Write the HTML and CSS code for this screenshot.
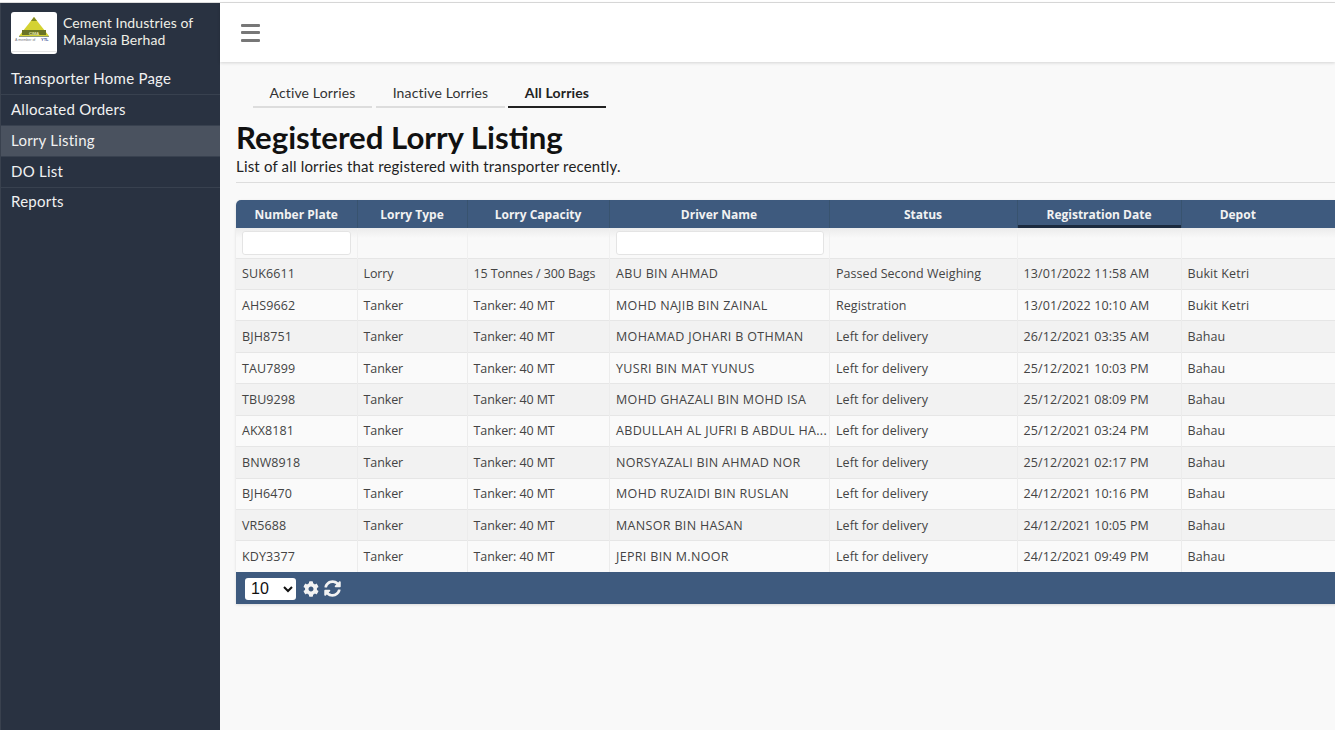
FILE: index.html
```html
<!DOCTYPE html>
<html lang="en">
<head>
<meta charset="utf-8">
<title>Registered Lorry Listing</title>
<link rel="stylesheet" href="styles.css">
</head>
<body>
<div class="app">
  <aside class="sidebar">
    <div class="brand">
      <div class="logo">
        <svg viewBox="0 0 46 42" width="46" height="42">
          <polygon points="23,5 38,24 8,24" fill="#d4d232"/>
          <polygon points="23,5 26,9 20,9" fill="#7f8622"/>
          <rect x="11" y="18" width="24" height="5" fill="#6a7424"/>
          <rect x="8" y="24" width="30" height="1" fill="#8d9a7a"/>
          <text x="23" y="22.6" class="logo-mark" text-anchor="middle">CIMA</text>
          <text x="4" y="29" class="logo-small">A member of</text>
          <text x="30" y="29" class="logo-ytl">YTL</text>
          <rect x="0" y="39" width="46" height="1" fill="#e6e6e6"/>
        </svg>
      </div>
      <div class="brand-name">Cement Industries of Malaysia Berhad</div>
    </div>
    <nav class="nav">
      <a class="nav-item">Transporter Home Page</a>
      <a class="nav-item">Allocated Orders</a>
      <a class="nav-item active">Lorry Listing</a>
      <a class="nav-item">DO List</a>
      <a class="nav-item">Reports</a>
    </nav>
  </aside>
  <div class="main">
    <header class="topbar">
      <div class="burger"><span></span><span></span><span></span></div>
    </header>
    <div class="content">
      <div class="tabs">
        <a class="tab tab-a">Active Lorries</a>
        <a class="tab tab-b">Inactive Lorries</a>
        <a class="tab tab-c current">All Lorries</a>
      </div>
      <h1 class="title">Registered Lorry Listing</h1>
      <p class="subtitle">List of all lorries that registered with transporter recently.</p>
      <hr class="rule">
      <div class="grid">
        <table class="table">
          <colgroup>
            <col class="c1"><col class="c2"><col class="c3"><col class="c4"><col class="c5"><col class="c6"><col class="c7"><col class="c8">
          </colgroup>
          <thead>
            <tr class="head">
              <th>Number Plate</th><th>Lorry Type</th><th>Lorry Capacity</th><th>Driver Name</th><th>Status</th><th class="sorted">Registration Date</th><th>Depot</th><th></th>
            </tr>
            <tr class="filter">
              <td><input class="filter-input" type="text"></td><td></td><td></td><td><input class="filter-input" type="text"></td><td></td><td></td><td></td><td></td>
            </tr>
          </thead>
          <tbody>
            <tr><td>SUK6611</td><td>Lorry</td><td>15 Tonnes / 300 Bags</td><td>ABU BIN AHMAD</td><td>Passed Second Weighing</td><td>13/01/2022 11:58 AM</td><td>Bukit Ketri</td><td></td></tr>
            <tr><td>AHS9662</td><td>Tanker</td><td>Tanker: 40 MT</td><td>MOHD NAJIB BIN ZAINAL</td><td>Registration</td><td>13/01/2022 10:10 AM</td><td>Bukit Ketri</td><td></td></tr>
            <tr><td>BJH8751</td><td>Tanker</td><td>Tanker: 40 MT</td><td>MOHAMAD JOHARI B OTHMAN</td><td>Left for delivery</td><td>26/12/2021 03:35 AM</td><td>Bahau</td><td></td></tr>
            <tr><td>TAU7899</td><td>Tanker</td><td>Tanker: 40 MT</td><td>YUSRI BIN MAT YUNUS</td><td>Left for delivery</td><td>25/12/2021 10:03 PM</td><td>Bahau</td><td></td></tr>
            <tr><td>TBU9298</td><td>Tanker</td><td>Tanker: 40 MT</td><td>MOHD GHAZALI BIN MOHD ISA</td><td>Left for delivery</td><td>25/12/2021 08:09 PM</td><td>Bahau</td><td></td></tr>
            <tr><td>AKX8181</td><td>Tanker</td><td>Tanker: 40 MT</td><td>ABDULLAH AL JUFRI B ABDUL HA...</td><td>Left for delivery</td><td>25/12/2021 03:24 PM</td><td>Bahau</td><td></td></tr>
            <tr><td>BNW8918</td><td>Tanker</td><td>Tanker: 40 MT</td><td>NORSYAZALI BIN AHMAD NOR</td><td>Left for delivery</td><td>25/12/2021 02:17 PM</td><td>Bahau</td><td></td></tr>
            <tr><td>BJH6470</td><td>Tanker</td><td>Tanker: 40 MT</td><td>MOHD RUZAIDI BIN RUSLAN</td><td>Left for delivery</td><td>24/12/2021 10:16 PM</td><td>Bahau</td><td></td></tr>
            <tr><td>VR5688</td><td>Tanker</td><td>Tanker: 40 MT</td><td>MANSOR BIN HASAN</td><td>Left for delivery</td><td>24/12/2021 10:05 PM</td><td>Bahau</td><td></td></tr>
            <tr><td>KDY3377</td><td>Tanker</td><td>Tanker: 40 MT</td><td>JEPRI BIN M.NOOR</td><td>Left for delivery</td><td>24/12/2021 09:49 PM</td><td>Bahau</td><td></td></tr>
          </tbody>
        </table>
        <div class="pager">
          <select class="page-size"><option>10</option></select>
          <svg class="pager-icon" viewBox="0 0 512 512" width="16" height="16"><path fill="#f2f2f2" d="M487.4 315.7l-42.6-24.6c4.3-23.2 4.3-47 0-70.2l42.6-24.6c4.9-2.8 7.1-8.6 5.5-14-11.1-35.6-30-67.8-54.7-94.6-3.8-4.1-10-5.1-14.8-2.3L380.8 110c-17.9-15.4-38.5-27.3-60.8-35.1V25.8c0-5.6-3.9-10.5-9.4-11.7-36.7-8.2-74.3-7.8-109.2 0-5.5 1.2-9.4 6.1-9.4 11.7V75c-22.2 7.9-42.8 19.8-60.8 35.1L88.7 85.5c-4.9-2.8-11-1.9-14.8 2.3-24.7 26.7-43.6 58.9-54.7 94.6-1.7 5.4.6 11.2 5.5 14L67.3 221c-4.3 23.2-4.3 47 0 70.2l-42.6 24.6c-4.9 2.8-7.1 8.6-5.5 14 11.1 35.6 30 67.8 54.7 94.6 3.8 4.1 10 5.1 14.8 2.3l42.6-24.6c17.9 15.4 38.5 27.3 60.8 35.1v49.2c0 5.6 3.9 10.5 9.4 11.7 36.7 8.2 74.3 7.8 109.2 0 5.5-1.2 9.4-6.1 9.4-11.7v-49.2c22.2-7.9 42.8-19.8 60.8-35.1l42.6 24.6c4.9 2.8 11 1.9 14.8-2.3 24.7-26.7 43.6-58.9 54.7-94.6 1.5-5.5-.7-11.3-5.6-14.1zM256 336c-44.1 0-80-35.9-80-80s35.9-80 80-80 80 35.9 80 80-35.9 80-80 80z"/></svg>
          <svg class="pager-icon" viewBox="0 0 512 512" width="17" height="17"><path fill="#f2f2f2" d="M370.7 133.3C339.5 104 298.9 88 255.8 88c-77.5.1-144.3 53.2-162.8 126.9-1.3 5.4-6.1 9.2-11.7 9.2H24.1c-7.5 0-13.2-6.8-11.8-14.2C33.9 94.9 134.8 8 256 8c66.4 0 126.8 26.1 171.3 68.7L463 41c15.1-15.1 41-4.4 41 17v134c0 13.3-10.7 24-24 24H346c-21.4 0-32.1-25.9-17-41l41.7-41.7zM32 296h134c21.4 0 32.1 25.9 17 41l-41.7 41.7c31.2 29.3 71.8 45.3 114.9 45.3 77.4-.1 144.3-53.1 162.8-126.8 1.3-5.4 6.1-9.2 11.7-9.2h57.3c7.5 0 13.2 6.8 11.8 14.2C478.1 417.1 377.2 504 256 504c-66.4 0-126.8-26.1-171.3-68.7L49 471c-15.1 15.1-41 4.4-41-17V320c0-13.3 10.7-24 24-24z"/></svg>
        </div>
      </div>
    </div>
  </div>
</div>
</body>
</html>
```

FILE: styles.css
```css
* { box-sizing: border-box; }
html, body { margin: 0; height: 100%; overflow: hidden; }
body { font-family: "Lato", sans-serif; background: #fff; }
.app { display: flex; height: 730px; padding-top: 3px; position: relative; }
.app::before { content: ""; position: absolute; left: 0; right: 0; top: 2px; height: 1px; background: #dcdcdc; }
.sidebar { width: 220px; flex: none; background: #293241; color: #f1f1f1; border-left: 1px solid #39414e; }
.brand { display: flex; align-items: flex-start; gap: 6px; padding: 9px 0 0 10px; height: 61px; }
.logo { width: 46px; height: 42px; background: #fff; border-radius: 3px; flex: none; overflow: hidden; }
.logo svg { display: block; }
.logo-mark { font-family: "Liberation Sans", sans-serif; font-size: 4px; font-weight: 700; fill: #e8e8b0; }
.logo-small { font-family: "Liberation Sans", sans-serif; font-size: 3.6px; fill: #6f7680; }
.logo-ytl { font-family: "Liberation Sans", sans-serif; font-size: 4px; font-weight: 700; fill: #3c5a9a; }
.brand-name { font-size: 14px; letter-spacing: .1px; line-height: 17px; width: 150px; margin-top: 2px; color: #efefe6; }
.nav { display: flex; flex-direction: column; }
.nav-item { height: 31px; font-size: 15px; letter-spacing: .24px; line-height: 28px; padding-left: 10px; border-bottom: 1px solid #38414f; color: #f1f1f1; }
.nav-item:last-child { border-bottom: 0; line-height: 26px; }
.nav-item.active { background: #4a525f; }
.main { flex: 1; min-width: 0; background: #f9f9f9; display: flex; flex-direction: column; }
.topbar { height: 59px; flex: none; background: #fff; box-shadow: 0 1px 3px rgba(0,0,0,.15); display: flex; align-items: center; padding-left: 21px; position: relative; }
.burger { width: 19px; display: flex; flex-direction: column; gap: 4.5px; }
.burger span { height: 3px; background: #777; border-radius: 1px; }
.content { flex: 1; padding: 19px 0 0 16px; overflow: hidden; }
.tabs { display: flex; padding-left: 17px; height: 27px; }
.tab { font-size: 14px; letter-spacing: .15px; line-height: 23px; height: 27px; text-align: center; color: #333; border-bottom: 2px solid #ddd; }
.tab-a { width: 119px; margin-right: 4px; }
.tab-b { width: 129px; margin-right: 3px; }
.tab-c { width: 98px; font-weight: 700; color: #222; border-bottom-color: #222; }
.title { margin: 13px 0 0; font-size: 31.2px; line-height: 33px; font-weight: 700; color: #111; }
.subtitle { margin: 3px 0 0; font-size: 15px; letter-spacing: .18px; line-height: 18px; color: #222; }
.rule { margin: 7px 0 0; border: 0; height: 1px; background: #ddd; }
.grid { margin-top: 17px; width: 1110px; border-radius: 5px 0 0 0; overflow: hidden; box-shadow: 0 1px 3px rgba(0,0,0,.12); }
.table { width: 1110px; table-layout: fixed; border-collapse: collapse; font-family: "Open Sans", sans-serif; font-size: 12.5px; letter-spacing: .1px; color: #444; }
.c1 { width: 121px; } .c2 { width: 110px; } .c3 { width: 142px; } .c4 { width: 220px; } .c5 { width: 188px; } .c6 { width: 164px; } .c7 { width: 113px; } .c8 { width: 52px; }
.head { background: #3e5a7e; height: 28px; }
.head th { color: #f2f2f2; font-size: 12px; letter-spacing: 0; font-weight: 700; text-align: center; padding: 1px 6px 0; border-right: 1px solid #38536f; }
.head th:nth-last-child(-n+2) { border-right: 0; }
.head th.sorted { box-shadow: inset 0 -3px 0 #1b2a3f; }
.filter { height: 30px; background: linear-gradient(#ebebeb, #f9f9f9 10px); }
.filter td { padding: 3px 6px 0; border-right: 1px solid #f0f0f0; vertical-align: top; }
.filter td:nth-child(4) { padding-right: 5px; }
.filter td:nth-last-child(-n+2) { border-right: 0; }
.filter-input { display: block; width: 100%; height: 24px; border: 1px solid #e4e4e4; border-radius: 3px; background: #fff; padding: 0; }
tbody tr { height: 31.45px; border-top: 1px solid #e6e6e6; }
tbody tr:nth-child(odd) { background: #f2f2f2; }
tbody tr:nth-child(even) { background: #fafafa; }
tbody td { padding: 0 6px; white-space: nowrap; overflow: hidden; border-right: 1px solid #ececec; }
tbody td:nth-child(2) { letter-spacing: -.1px; }
tbody td:nth-child(3) { letter-spacing: -.1px; }
tbody td:nth-child(4) { letter-spacing: .33px; padding: 0 2px 0 6.5px; }
tbody td:nth-child(5) { padding-left: 6.5px; letter-spacing: .05px; }
tbody td:nth-last-child(-n+2) { border-right: 0; }
.pager { height: 32px; border-top: 1px solid #3e5a7e; background: #3e5a7e; display: flex; align-items: center; gap: 5px; padding-left: 9px; }
.page-size { width: 51px; height: 22px; font-family: "Liberation Sans", sans-serif; font-size: 16px; background: #fff; border: 0; border-radius: 3px; color: #111; padding-left: 2px; margin-right: 2px; }
.pager-icon { display: block; flex: none; }
```
